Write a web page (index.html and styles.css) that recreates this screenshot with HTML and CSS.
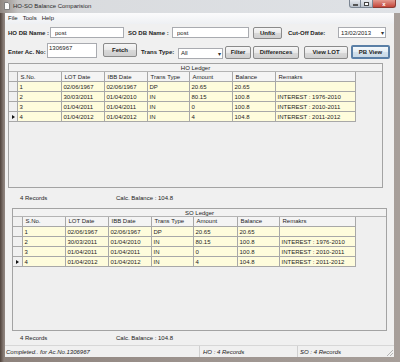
FILE: index.html
```html
<!DOCTYPE html>
<html lang="en">
<head>
    <meta charset="UTF-8">
    <meta name="viewport" content="width=device-width, initial-scale=1.0">
    <title>HO-SO Balance Comparision</title>
    <link rel="stylesheet" href="styles.css">
</head>
<body>
    <div class="window">
        <div class="titlebar">
            <svg class="app-icon" width="6" height="8" viewBox="0 0 6 8">
                <path d="M0.5 0.5 H4 L5.5 2 V7.5 H0.5 Z" fill="#fafafa" stroke="#6c6c6c" stroke-width="0.8"/>
            </svg>
            <span class="title">HO-SO Balance Comparision</span>
            <div class="controls">
                <span class="ctl ctl-min"><i></i></span>
                <span class="ctl ctl-max"><i></i></span>
                <span class="ctl ctl-close">x</span>
            </div>
        </div>

        <div class="client">
            <div class="menubar">
                <span>File</span>
                <span>Tools</span>
                <span>Help</span>
            </div>

            <div class="row row-db">
                <label class="lbl lbl-ho">HO DB Name :</label>
                <input class="textbox tb-ho" type="text" value="post">
                <label class="lbl lbl-so">SO DB Name :</label>
                <input class="textbox tb-so" type="text" value="post">
                <button class="btn btn-unfix">Unfix</button>
                <label class="lbl lbl-cut">Cut-Off Date:</label>
                <div class="combo combo-date"><span>13/02/2013</span><span class="arrow">&#9662;</span></div>
            </div>

            <div class="row row-acc">
                <label class="lbl lbl-acc">Enter Ac. No:</label>
                <textarea class="textbox tb-acc">1306967</textarea>
                <button class="btn btn-fetch">Fetch</button>
                <label class="lbl lbl-type">Trans Type:</label>
                <div class="combo combo-type"><span>All</span><span class="arrow">&#9662;</span></div>
                <button class="btn btn-filter">Filter</button>
                <button class="btn btn-diff">Differences</button>
                <button class="btn btn-lot">View LOT</button>
                <button class="btn btn-pb">PB View</button>
            </div>

            <div class="ledger ledger-ho">
                <div class="caption">HO Ledger</div>
                <table class="grid grid-ho">
                    <colgroup>
                        <col class="c-rh"><col class="c-sno"><col class="c-lot"><col class="c-ibb">
                        <col class="c-type"><col class="c-amt"><col class="c-bal"><col class="c-rem">
                    </colgroup>
                    <thead>
                        <tr><th class="rh"></th><th>S.No.</th><th>LOT Date</th><th>IBB Date</th><th>Trans Type</th><th>Amount</th><th>Balance</th><th>Remakrs</th></tr>
                    </thead>
                    <tbody>
                        <tr><td class="rh"></td><td>1</td><td>02/06/1967</td><td>02/06/1967</td><td>DP</td><td>20.65</td><td>20.65</td><td></td></tr>
                        <tr><td class="rh"></td><td>2</td><td>30/03/2011</td><td>01/04/2010</td><td>IN</td><td>80.15</td><td>100.8</td><td>INTEREST : 1976-2010</td></tr>
                        <tr><td class="rh"></td><td>3</td><td>01/04/2011</td><td>01/04/2011</td><td>IN</td><td>0</td><td>100.8</td><td>INTEREST : 2010-2011</td></tr>
                        <tr><td class="rh"><span class="pointer"></span></td><td>4</td><td>01/04/2012</td><td>01/04/2012</td><td>IN</td><td>4</td><td>104.8</td><td>INTEREST : 2011-2012</td></tr>
                    </tbody>
                </table>
            </div>

            <div class="summary summary-ho">
                <span class="count">4 Records</span>
                <span class="calc">Calc. Balance : 104.8</span>
            </div>

            <div class="ledger ledger-so">
                <div class="caption">SO Ledger</div>
                <table class="grid grid-so">
                    <colgroup>
                        <col class="c-rh"><col class="c-sno"><col class="c-lot"><col class="c-ibb">
                        <col class="c-type"><col class="c-amt"><col class="c-bal"><col class="c-rem">
                    </colgroup>
                    <thead>
                        <tr><th class="rh"></th><th>S.No.</th><th>LOT Date</th><th>IBB Date</th><th>Trans Type</th><th>Amount</th><th>Balance</th><th>Remakrs</th></tr>
                    </thead>
                    <tbody>
                        <tr><td class="rh"></td><td>1</td><td>02/06/1967</td><td>02/06/1967</td><td>DP</td><td>20.65</td><td>20.65</td><td></td></tr>
                        <tr><td class="rh"></td><td>2</td><td>30/03/2011</td><td>01/04/2010</td><td>IN</td><td>80.15</td><td>100.8</td><td>INTEREST : 1976-2010</td></tr>
                        <tr><td class="rh"></td><td>3</td><td>01/04/2011</td><td>01/04/2011</td><td>IN</td><td>0</td><td>100.8</td><td>INTEREST : 2010-2011</td></tr>
                        <tr><td class="rh"><span class="pointer"></span></td><td>4</td><td>01/04/2012</td><td>01/04/2012</td><td>IN</td><td>4</td><td>104.8</td><td>INTEREST : 2011-2012</td></tr>
                    </tbody>
                </table>
            </div>

            <div class="summary summary-so">
                <span class="count">4 Records</span>
                <span class="calc">Calc. Balance : 104.8</span>
            </div>

            <div class="statusbar">
                <span class="panel panel-msg">Completed.. for Ac.No.1306967</span>
                <span class="panel panel-ho">HO : 4 Records</span>
                <span class="panel panel-so">SO : 4 Records</span>
                <span class="grip"></span>
            </div>
        </div>
    </div>
</body>
</html>
```

FILE: styles.css
```css
* {
    box-sizing: border-box;
}
body {
    margin: 0;
    font-family: "Liberation Sans", Arial, sans-serif;
    font-size: 6px;
    color: #1b1b1b;
    background-color: #7a6b63;
}
.window {
    width: 400px;
    height: 362px;
    display: flex;
    flex-direction: column;
    background: linear-gradient(to right, #4f423b 0, #8d827c 4px, #9d948f 50%, #a79f9a 100%);
    overflow: hidden;
}

/* title bar */
.titlebar {
    height: 13px;
    display: flex;
    align-items: center;
    padding-left: 4px;
    background: linear-gradient(to right, #8f8680 0, #c3c2c2 18px, #d9dbde 60px, #dfe2e6 100%);
    position: relative;
}
.app-icon {
    margin-top: -1px;
}
.title {
    margin-left: 3px;
    color: #2a2a2a;
    font-size: 6px;
    margin-top: -1px;
}
.controls {
    position: absolute;
    right: 4px;
    top: 0;
    display: flex;
}
.ctl {
    height: 8px;
    display: flex;
    align-items: center;
    justify-content: center;
    border: 1px solid #7b8592;
    border-top: none;
    background: linear-gradient(#e6e9ee, #b9c1cb);
}
.ctl-min {
    width: 12px;
    border-radius: 0 0 0 3px;
}
.ctl-min i {
    width: 5px;
    height: 2px;
    margin-top: 3px;
    background: #fff;
    border: 0.5px solid #555;
}
.ctl-max {
    width: 12px;
    border-left: none;
}
.ctl-max i {
    width: 5px;
    height: 4px;
    border: 1px solid #444;
    background: #fff;
}
.ctl-close {
    width: 23px;
    border-left: none;
    border-radius: 0 0 3px 0;
    border-color: #8a3b33;
    background: linear-gradient(#e39a8f, #c4463a);
    color: #fff;
    font-weight: bold;
    font-size: 6px;
    line-height: 1;
}

/* client area */
.client {
    height: 344px;
    margin: 0 6px 0 5px;
    background-color: #f0f0f0;
    display: flex;
    flex-direction: column;
}
.menubar {
    height: 11px;
    display: flex;
    align-items: center;
    gap: 5px;
    padding-left: 3px;
    background: linear-gradient(#fbfbfc, #eef0f3);
    color: #222;
}

.row {
    display: flex;
    padding-left: 3px;
}
.row-db {
    height: 12px;
    margin-top: 3px;
    align-items: center;
}
.row-acc {
    height: 16px;
    margin-top: 4px;
    align-items: flex-start;
}
.lbl {
    font-weight: bold;
    color: #1e1e1e;
    white-space: nowrap;
}
.lbl-ho { width: 42px; }
.lbl-so { width: 44px; margin-left: 4px; }
.lbl-cut { width: 50px; margin-left: 6px; }
.lbl-acc { width: 39px; margin-top: 6px; }
.lbl-type { width: 37px; margin-left: 4px; margin-top: 6px; }

.textbox {
    height: 11px;
    margin: 0;
    padding: 0 0 0 4px;
    border: 1px solid #a9abb0;
    background: #fff;
    font-family: inherit;
    font-size: 6px;
    color: #222;
    outline: none;
}
.tb-ho { width: 74px; }
.tb-so { width: 77px; }
.tb-acc {
    width: 50px;
    height: 15px;
    padding: 1px 0 0 1px;
    resize: none;
    overflow: hidden;
    line-height: 7px;
}

.btn {
    margin: 0;
    padding: 0;
    font-family: inherit;
    font-size: 6px;
    font-weight: bold;
    color: #1e1e1e;
    border: 1px solid #8a8a8a;
    border-radius: 2px;
    background: linear-gradient(#f6f6f6 0, #e9e9e9 50%, #d9d9d9 51%, #cfcfcf 100%);
}
.btn-unfix { width: 29px; height: 12px; margin-left: 4px; }
.btn-fetch { width: 34px; height: 14px; margin-left: 6px; }
.btn-filter { width: 26px; height: 13px; margin-left: 2px; margin-top: 3px; }
.btn-diff { width: 46px; height: 13px; margin-left: 2px; margin-top: 3px; }
.btn-lot { width: 44px; height: 13px; margin-left: 5px; margin-top: 3px; }
.btn-pb {
    width: 39px;
    height: 14px;
    margin-left: 3px;
    margin-top: 2px;
    border: 2px solid #5a7fa6;
    background: linear-gradient(#f4f8fb 0, #e4edf4 50%, #d3e1ec 51%, #c9d9e6 100%);
}

.combo {
    height: 11px;
    display: flex;
    align-items: center;
    justify-content: space-between;
    padding: 0 1px 0 2px;
    border: 1px solid #a9abb0;
    background: #fff;
    color: #222;
}
.combo .arrow {
    font-size: 6px;
    color: #333;
}
.combo-date { width: 48px; }
.combo-type { width: 45px; margin-top: 5px; }

/* ledgers */
.ledger {
    width: 375px;
    border: 1px solid #a3a3a3;
    background-color: #efefef;
}
.ledger-ho {
    height: 125px;
    margin: 4px 0 0 3px;
}
.ledger-so {
    height: 124px;
    margin: 0 0 0 7px;
}
.caption {
    height: 8px;
    line-height: 8px;
    text-align: center;
    border-bottom: 1px solid #b4b4b4;
    background: #f2f2f2;
    color: #222;
}
.grid {
    border-collapse: collapse;
    table-layout: fixed;
}
.grid-ho { width: 346px; }
.grid-so { width: 342px; }
.grid-ho .c-rh { width: 8px; }
.grid-ho .c-sno { width: 44px; }
.grid-ho .c-lot { width: 43px; }
.grid-ho .c-ibb { width: 43px; }
.grid-ho .c-type { width: 42px; }
.grid-ho .c-amt { width: 43px; }
.grid-ho .c-bal { width: 43px; }
.grid-ho .c-rem { width: 80px; }
.grid-so .c-rh { width: 9px; }
.grid-so .c-sno { width: 43px; }
.grid-so .c-lot { width: 43px; }
.grid-so .c-ibb { width: 43px; }
.grid-so .c-type { width: 42px; }
.grid-so .c-amt { width: 44px; }
.grid-so .c-bal { width: 42px; }
.grid-so .c-rem { width: 76px; }
.grid tr {
    height: 10px;
}
.grid th,
.grid td {
    padding: 0 0 0 2px;
    height: 10px;
    line-height: 8px;
    border: 1px solid #a8a8a8;
    text-align: left;
    font-weight: normal;
    white-space: nowrap;
    overflow: hidden;
    color: #1e1e1e;
}
.grid tr > :first-child {
    border-left: none;
}
.grid thead tr:first-child > * {
    border-top: none;
}
.grid th {
    background: #f4f4f4;
    padding-left: 3px;
}
.grid td {
    background: #fefcdc;
}
.grid .rh {
    background: #f0f0f0;
    padding: 0;
}
.pointer {
    display: block;
    width: 0;
    height: 0;
    margin-left: 3px;
    border-top: 2.5px solid transparent;
    border-bottom: 2.5px solid transparent;
    border-left: 3px solid #111;
}

.summary {
    display: flex;
    align-items: center;
    padding-left: 15px;
    color: #222;
}
.summary-ho { height: 20px; }
.summary-so { height: 14px; }
.summary .count { width: 96px; }

/* status bar */
.statusbar {
    height: 12px;
    display: flex;
    align-items: center;
    border-top: 1px solid #d7d7d7;
    background: #f0f0f0;
    font-style: italic;
    color: #222;
    position: relative;
}
.panel {
    height: 100%;
    display: flex;
    align-items: center;
    padding-left: 2px;
    border-right: 1px solid #d0d0d0;
}
.panel-msg { width: 195px; padding-left: 1px; }
.panel-ho { width: 98px; padding-left: 3px; }
.panel-so { flex: 1; border-right: none; }
.grip {
    position: absolute;
    right: 1px;
    bottom: 1px;
    width: 7px;
    height: 7px;
    background: linear-gradient(135deg, transparent 55%, #b5b5b5 55%, #b5b5b5 62%, transparent 62%, transparent 75%, #b5b5b5 75%, #b5b5b5 82%, transparent 82%);
}
```
